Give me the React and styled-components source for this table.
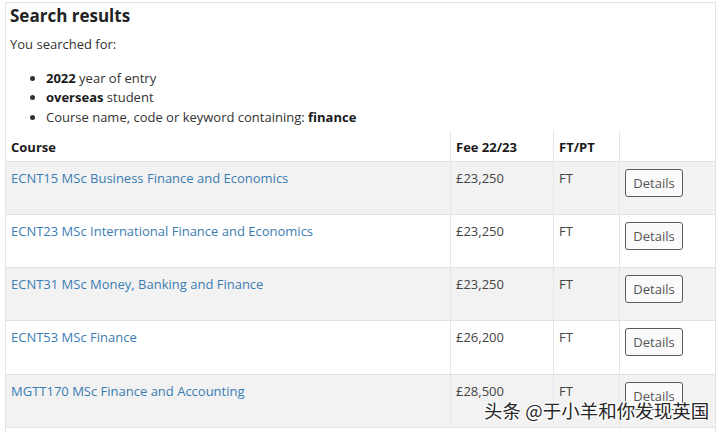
import React from "react";
import styled, { createGlobalStyle } from "styled-components";

const GlobalStyle = createGlobalStyle`
  html, body {
    margin: 0;
    padding: 0;
    background: #ffffff;
  }
  body {
    font-family: "Open Sans", "Liberation Sans", sans-serif;
    color: #333333;
    width: 720px;
    height: 432px;
    overflow: hidden;
  }
`;

const Page = styled.div`
  position: relative;
  width: 720px;
  height: 432px;
  padding: 2px 4px 0 5px;
  box-sizing: border-box;
`;

const Panel = styled.section`
  border: 1px solid #e4e4e4;
  border-bottom: none;
  height: 430px;
  box-sizing: border-box;
`;

const Heading = styled.h2`
  margin: 1px 0 7.5px 4px;
  font-size: 17px;
  line-height: 23px;
  font-weight: 700;
  color: #222222;
`;

const Intro = styled.p`
  margin: 0 0 14.5px 4px;
  font-size: 13px;
  line-height: 19.5px;
`;

const Criteria = styled.ul`
  margin: 0 0 3.5px 0;
  padding-left: 40px;
  font-size: 13px;
  line-height: 19.5px;
  color: #333333;

  b {
    color: #1a1a1a;
    font-weight: 700;
  }
`;

const Grid = styled.div`
  display: grid;
  grid-template-columns: 444px 103px 66px 1fr;
`;

const Row = styled(Grid)`
  background: ${(p) => (p.$shaded ? "#f2f2f2" : "#ffffff")};
  border-bottom: 1px solid #e2e2e2;
  height: ${(p) => (p.$head ? "31px" : "53.33px")};
  box-sizing: border-box;
`;

const Cell = styled.div`
  padding: ${(p) => (p.$head ? "7px 5px 4px" : "7px 5px 0")};
  font-size: 13px;
  line-height: 19.5px;
  font-weight: ${(p) => (p.$head ? 700 : 400)};
  color: ${(p) => (p.$head ? "#1a1a1a" : "#444444")};
  border-left: ${(p) => (p.$first ? "none" : "1px solid #e6e6e6")};
  box-sizing: border-box;
  white-space: nowrap;
`;

const CourseLink = styled.a`
  color: #3a7db3;
  text-decoration: none;
`;

const DetailsButton = styled.button`
  font-family: "Open Sans", "Liberation Sans", sans-serif;
  font-size: 13px;
  color: #555555;
  background: #fafafa;
  border: 1px solid #5a5a5a;
  border-radius: 3px;
  width: 58px;
  height: 28px;
  margin-top: 0;
  padding: 0;
  cursor: pointer;
`;

const Watermark = styled.div`
  position: absolute;
  left: 484px;
  top: 397px;
  font-family: "Noto Sans CJK SC", sans-serif;
  font-size: 18.5px;
  line-height: 26px;
  color: #262626;
  white-space: nowrap;
  text-shadow: 1px 0 0 #fff, -1px 0 0 #fff, 0 1px 0 #fff, 0 -1px 0 #fff,
    1px 1px 0 #fff, -1px -1px 0 #fff, 1px -1px 0 #fff, -1px 1px 0 #fff;
`;

const courses = [
  { name: "ECNT15 MSc Business Finance and Economics", fee: "£23,250" },
  { name: "ECNT23 MSc International Finance and Economics", fee: "£23,250" },
  { name: "ECNT31 MSc Money, Banking and Finance", fee: "£23,250" },
  { name: "ECNT53 MSc Finance", fee: "£26,200" },
  { name: "MGTT170 MSc Finance and Accounting", fee: "£28,500" },
];

export default function App() {
  return (
    <>
      <GlobalStyle />
      <Page>
        <Panel>
          <Heading>Search results</Heading>
          <Intro>You searched for:</Intro>
          <Criteria>
            <li>
              <b>2022</b> year of entry
            </li>
            <li>
              <b>overseas</b> student
            </li>
            <li>
              Course name, code or keyword containing: <b>finance</b>
            </li>
          </Criteria>
          <Row $head>
            <Cell $head $first>Course</Cell>
            <Cell $head>Fee 22/23</Cell>
            <Cell $head>FT/PT</Cell>
            <Cell $head></Cell>
          </Row>
          {courses.map((c, i) => (
            <Row key={c.name} $shaded={i % 2 === 0}>
              <Cell $first>
                <CourseLink href="#">{c.name}</CourseLink>
              </Cell>
              <Cell>{c.fee}</Cell>
              <Cell>FT</Cell>
              <Cell>
                <DetailsButton>Details</DetailsButton>
              </Cell>
            </Row>
          ))}
        </Panel>
        <Watermark>头条 @于小羊和你发现英国</Watermark>
      </Page>
    </>
  );
}
